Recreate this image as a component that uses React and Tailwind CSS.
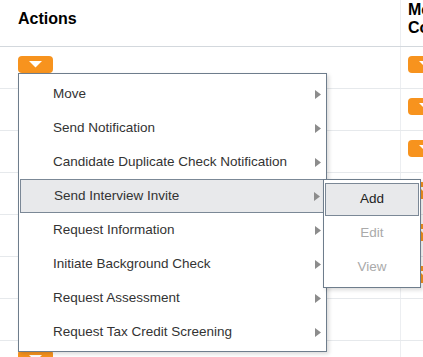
import React from 'react';

const menuItems = [
  'Move',
  'Send Notification',
  'Candidate Duplicate Check Notification',
  'Send Interview Invite',
  'Request Information',
  'Initiate Background Check',
  'Request Assessment',
  'Request Tax Credit Screening',
];

function DropButton() {
  return (
    <button className="flex h-[17px] w-[35px] items-center justify-center rounded-[4px] bg-[#f7931e]">
      <svg width="13" height="7" viewBox="0 0 13 7">
        <polygon points="0,0 13,0 6.5,6.5" fill="#fff" />
      </svg>
    </button>
  );
}

function Arrow() {
  return (
    <svg width="6" height="9" viewBox="0 0 6 9" className="shrink-0">
      <polygon points="0,0 6,4.5 0,9" fill="#8c8c8c" />
    </svg>
  );
}

export default function App() {
  const rows = Array.from({ length: 8 });

  return (
    <div className="relative h-[357px] w-[423px] overflow-hidden bg-white text-[#222]" style={{ fontFamily: '"Liberation Sans", Arial, sans-serif' }}>
      {/* Header */}
      <div className="flex h-[47px] border-b border-[#d3d8dd]">
        <div className="w-[401px] shrink-0 border-r border-[#eceef1] pl-[18px] pt-[10px] text-[16px] font-bold leading-[18px] text-black">
          Actions
        </div>
        <div className="w-[80px] shrink-0 pl-[7px] pt-[1px] text-[16px] font-bold leading-[18px] text-black">
          Message Count
        </div>
      </div>

      {/* Rows */}
      {rows.map((_, i) => (
        <div key={i} className="flex h-[42px] border-b border-[#e6e9ec]">
          <div className="w-[401px] shrink-0 border-r border-[#eceef1] pl-[18px] pt-[9px]">
            <DropButton />
          </div>
          <div className="pl-[7px] pt-[9px]">
            {i < 6 && <DropButton />}
          </div>
        </div>
      ))}

      {/* Actions menu */}
      <div className="absolute left-[18px] top-[73px] w-[309px] border border-[#6e7d8c] bg-white pb-[2px] pl-[1px] pr-[2px] pt-[3px] shadow-[2px_2px_4px_rgba(0,0,0,0.15)]">
        {menuItems.map((label) => {
          const active = label === 'Send Interview Invite';
          return (
            <div
              key={label}
              className={`relative flex h-[34px] items-center justify-between pl-[33px] pr-[3px] text-[13.5px] text-[#333] ${
                active ? 'border border-[#7b8896] bg-[#e8e9eb] pl-[32px] pr-[2px]' : ''
              }`}
            >
              <span>{label}</span>
              <Arrow />
              {active && (
                <div className="absolute left-full top-[-1px] w-[98px] border border-[#6e7d8c] bg-white px-[1px] py-[3px] text-center text-[13.5px] shadow-[2px_2px_4px_rgba(0,0,0,0.15)]">
                  <div className="flex h-[33px] items-center justify-center border border-[#7b8896] bg-[#e8e9eb] text-[#222]">Add</div>
                  <div className="flex h-[34px] items-center justify-center text-[#aaa]">Edit</div>
                  <div className="flex h-[34px] items-center justify-center text-[#aaa]">View</div>
                </div>
              )}
            </div>
          );
        })}
      </div>
    </div>
  );
}
